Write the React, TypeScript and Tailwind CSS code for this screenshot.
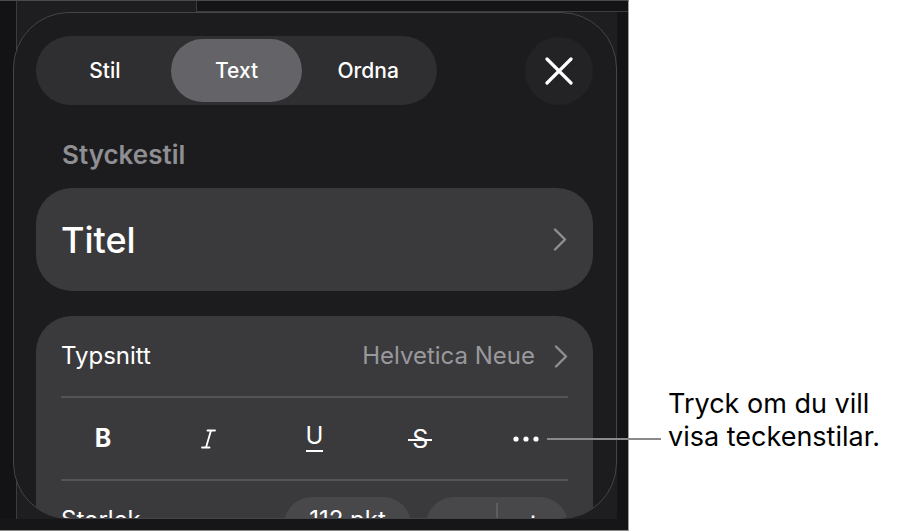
import React from 'react';

const tabs = ['Stil', 'Text', 'Ordna'];

function Chevron() {
    return (
        <svg width="14" height="23" viewBox="0 0 14 23" fill="none">
            <polyline points="2,1.5 12,11.5 2,21.5" stroke="#8e8e93" strokeWidth="2.4" strokeLinecap="round" strokeLinejoin="round" />
        </svg>
    );
}

function CloseIcon() {
    return (
        <svg width="28" height="28" viewBox="0 0 28 28" fill="none">
            <line x1="2" y1="2" x2="26" y2="26" stroke="#fff" strokeWidth="3.2" strokeLinecap="round" />
            <line x1="26" y1="2" x2="2" y2="26" stroke="#fff" strokeWidth="3.2" strokeLinecap="round" />
        </svg>
    );
}

function ItalicIcon() {
    return (
        <svg width="15" height="20" viewBox="0 0 15 20" fill="none">
            <line x1="10" y1="1.5" x2="5" y2="18.5" stroke="#fff" strokeWidth="1.8" />
            <line x1="6.5" y1="1.5" x2="14" y2="1.5" stroke="#fff" strokeWidth="1.8" strokeLinecap="round" />
            <line x1="1" y1="18.5" x2="8.5" y2="18.5" stroke="#fff" strokeWidth="1.8" strokeLinecap="round" />
        </svg>
    );
}

function MoreIcon() {
    return (
        <svg width="26" height="6" viewBox="0 0 26 6" fill="#fff">
            <circle cx="3" cy="3" r="2.6" />
            <circle cx="13" cy="3" r="2.6" />
            <circle cx="23" cy="3" r="2.6" />
        </svg>
    );
}

export default function App() {
    return (
        <div className="relative flex w-[897px] h-[531px] bg-white font-['Inter',sans-serif]">
            {/* Device screen */}
            <div className="flex flex-col w-[629px] h-full bg-[#1e1e20] border-t border-b border-r border-t-[#4a4a4c] border-b-[#8a8a8a] border-r-[#a0a0a0]">
                <div className="relative flex-1 overflow-hidden">
                    {/* App content behind the sheet */}
                    <div className="absolute left-0 top-0 bottom-0 w-[17px] bg-[#131316] border-r border-[#3c3c3e]" />
                    <div className="absolute left-[196px] right-0 top-0 h-[11px] bg-[#141416] border-l border-b border-[#3c3c3e]" />
                    <div className="absolute right-0 top-[11px] bottom-0 w-[11px] bg-[#141416]" />

                    {/* Format sheet */}
                    <div className="absolute left-[13px] top-[11px] w-[604px] bottom-0 rounded-[56px] border border-[#454548] bg-[#1c1c1e] overflow-hidden pt-[23px] pl-[22px] pr-[23px]">
                        <div className="flex items-center justify-between h-[69px]">
                            <div className="flex w-[401px] h-[69px] rounded-full bg-[#2f2f32] p-[3px]">
                                {tabs.map((t) => (
                                    <div
                                        key={t}
                                        className={
                                            t === 'Text'
                                                ? 'flex-1 flex items-center justify-center rounded-full bg-[#646468] text-[21px] font-medium text-white'
                                                : 'flex-1 flex items-center justify-center rounded-full text-[21px] font-medium text-white'
                                        }
                                    >
                                        {t}
                                    </div>
                                ))}
                            </div>
                            <div className="flex items-center justify-center w-[68px] h-[68px] rounded-full bg-[#232325]">
                                <CloseIcon />
                            </div>
                        </div>

                        <div className="mt-[34px] pl-[26px] text-[26px] leading-[32px] font-semibold text-[#8e8e93]">
                            Styckestil
                        </div>

                        <div className="mt-[17px] flex items-center justify-between h-[103px] rounded-[36px] bg-[#3a3a3c] pl-[25px] pr-[26px]">
                            <span className="text-[36px] font-medium text-white">Titel</span>
                            <Chevron />
                        </div>

                        <div className="mt-[25px] flex flex-col rounded-[36px] bg-[#3a3a3c] px-[25px]">
                            <div className="flex items-center justify-between h-[80px]">
                                <span className="text-[24px] text-white">Typsnitt</span>
                                <div className="flex items-center gap-[19px]">
                                    <span className="text-[24px] text-[#98989d]">Helvetica Neue</span>
                                    <Chevron />
                                </div>
                            </div>
                            <div className="h-[2px] bg-[#545458]" />
                            <div className="grid grid-cols-5 items-center h-[81px] -mx-[11px]">
                                <div className="flex justify-center text-[25px] font-bold text-white">B</div>
                                <div className="flex justify-center">
                                    <ItalicIcon />
                                </div>
                                <div className="flex justify-center">
                                    <div className="flex flex-col items-center">
                                        <span className="text-[24px] leading-[22px] text-white">U</span>
                                        <div className="mt-[3px] h-[2px] w-[17px] bg-white" />
                                    </div>
                                </div>
                                <div className="flex justify-center">
                                    <span className="relative text-[25px] leading-[26px] text-white">
                                        S
                                        <span className="absolute left-[-4px] right-[-4px] top-[13px] h-[2px] bg-white" />
                                    </span>
                                </div>
                                <div className="flex justify-center">
                                    <MoreIcon />
                                </div>
                            </div>
                            <div className="h-[2px] bg-[#545458]" />
                            <div className="flex items-start justify-between h-[90px]">
                                <span className="mt-[24px] text-[24px] leading-[30px] text-white">Storlek</span>
                                <div className="mt-[16px] flex items-start gap-[15px]">
                                    <div className="flex justify-center w-[127px] h-[56px] rounded-full bg-[#48484b] pt-[8px] text-[24px] leading-[30px] text-white">
                                        112 pkt
                                    </div>
                                    <div className="flex items-start w-[142px] h-[56px] rounded-full bg-[#48484b] pt-[6px] text-white">
                                        <div className="flex-1 flex justify-center text-[28px] leading-[34px]">−</div>
                                        <div className="w-[2px] h-[44px] bg-[#5e5e62]" />
                                        <div className="flex-1 flex justify-center text-[28px] leading-[34px]">+</div>
                                    </div>
                                </div>
                            </div>
                        </div>
                    </div>
                </div>
                <div className="h-[11px] bg-[#161618]" />
            </div>

            {/* Callout */}
            <div className="flex-1 pl-[39px] pt-[387px] text-[27px] leading-[33px] text-black">
                <div>Tryck om du vill</div>
                <div>visa teckenstilar.</div>
            </div>
            <div className="absolute left-[547px] top-[438px] w-[114px] h-[2px] bg-[#8a8a8a]" />
        </div>
    );
}
